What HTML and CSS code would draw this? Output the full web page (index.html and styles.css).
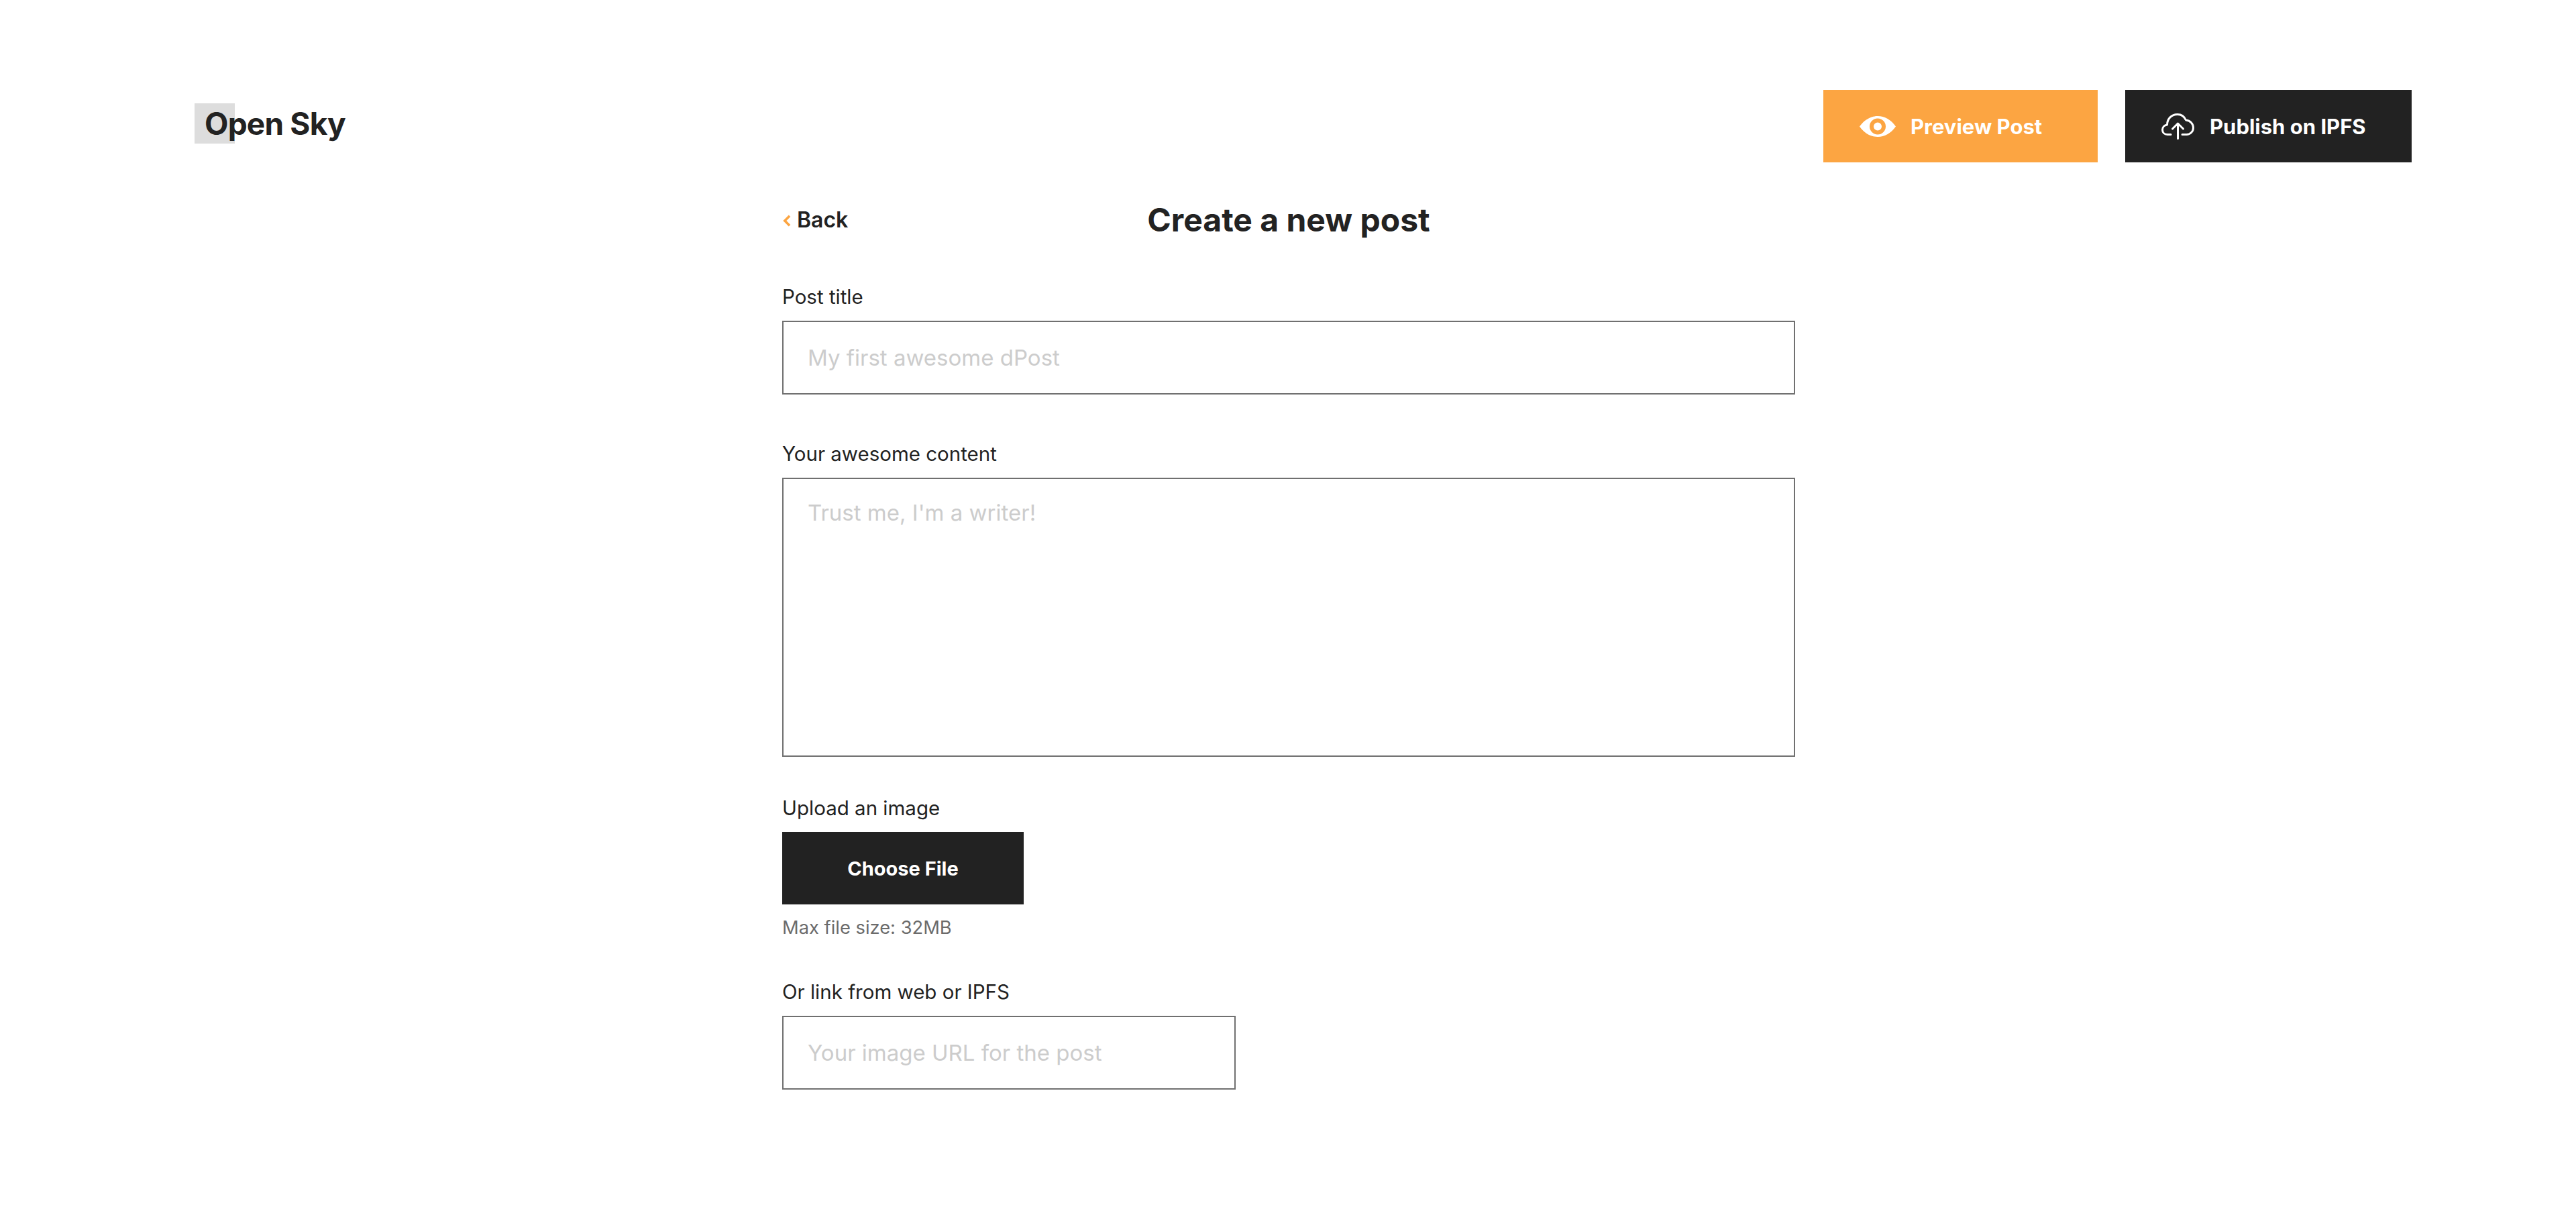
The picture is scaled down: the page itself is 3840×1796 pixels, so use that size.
FILE: index.html
```html
<!DOCTYPE html>
<html lang="en">
<head>
<meta charset="utf-8">
<title>Open Sky</title>
<link rel="stylesheet" href="styles.css">
</head>
<body>
<header class="topbar">
  <a class="logo" href="#"><span class="logo-mark"></span><span class="logo-text">Open Sky</span></a>
  <div class="actions">
    <button class="btn btn-orange" type="button">
      <svg class="icon-eye" viewBox="0 0 54 31" aria-hidden="true"><path fill-rule="evenodd" fill="#fff" d="M0 15.500C7 5.500 16.500 0 27 0s20 5.500 27 15.500C47 25.500 37.500 31 27 31S7 25.500 0 15.500Zm27 12a12 12 0 1 0 0-24 12 12 0 0 0 0 24Zm0-6a6 6 0 1 1 0-12 6 6 0 0 1 0 12Z"/></svg>
      <span>Preview Post</span>
    </button>
    <button class="btn btn-dark" type="button">
      <svg class="icon-cloud" viewBox="0 0 49 39" aria-hidden="true"><path fill="none" stroke="#fff" stroke-width="3" stroke-linecap="round" stroke-linejoin="round" d="M14 31.500H9C4.500 31.500 1.500 28.500 1.500 24.500c0-4 2.800-7 7-7.500C8.500 8 15 1.500 24 1.500c5.500 0 10 3 12.500 8.500 6.500.5 11 5.500 11 11.500 0 5.500-4.500 10-10 10H31M24.500 37.500V15M16.500 23l8-8 8 8"/></svg>
      <span>Publish on IPFS</span>
    </button>
  </div>
</header>
<main class="form-wrap">
  <div class="title-row">
    <a class="back" href="#"><svg class="back-chevron" viewBox="0 0 15 20" aria-hidden="true"><path fill="none" stroke="#fca542" stroke-width="4" d="M12 2 4 10l8 8"/></svg><span>Back</span></a>
    <h1>Create a new post</h1>
  </div>
  <form>
    <label class="label" for="title">Post title</label>
    <input class="field field-gap" id="title" type="text" placeholder="My first awesome dPost">
    <label class="label" for="content">Your awesome content</label>
    <textarea class="field area" id="content" placeholder="Trust me, I'm a writer!"></textarea>
    <label class="label" for="file">Upload an image</label>
    <button class="file-btn" id="file" type="button">Choose File</button>
    <p class="hint">Max file size: 32MB</p>
    <label class="label" for="url">Or link from web or IPFS</label>
    <input class="field short" id="url" type="text" placeholder="Your image URL for the post">
  </form>
</main>
</body>
</html>
```
FILE: styles.css
```css
* { box-sizing: border-box; }
html, body { margin: 0; padding: 0; background: #fff; }
body { font-family: "Inter", "Lato", sans-serif; color: #222; min-height: 1796px; }
.topbar { display: flex; justify-content: space-between; align-items: flex-start; padding: 134px 245px 0 290px; height: 242px; }
.logo { display: flex; align-items: center; margin-top: 20px; height: 60px; color: #222; text-decoration: none; position: relative; }
.logo-mark { position: absolute; left: 0; top: 0; width: 60px; height: 60px; background: #ddd; }
.logo-text { position: relative; margin-left: 15px; font-size: 46px; font-weight: 700; letter-spacing: -0.8px; }
.actions { display: flex; gap: 41px; }
.btn { display: flex; align-items: center; height: 108px; border: 0; padding: 0 0 0 54px; color: #fff; font: 700 31px "Inter", sans-serif; }
.btn-orange { width: 409px; background: #fca542; gap: 22px; }
.btn-dark { width: 427px; background: #222; gap: 23px; }
.icon-eye { width: 54px; height: 31px; flex: none; }
.icon-cloud { width: 49px; height: 39px; flex: none; }
.form-wrap { width: 1510px; margin-left: 1166px; }
.title-row { position: relative; height: 182px; display: flex; justify-content: center; }
.title-row h1 { margin: 57px 0 0; font-size: 48px; font-weight: 700; line-height: 58px; color: #222; }
.back { position: absolute; left: 0; top: 67px; display: flex; align-items: center; gap: 8px; font-size: 32px; font-weight: 600; line-height: 38px; color: #222; text-decoration: none; }
.back-chevron { width: 14px; height: 18px; margin-top: 2px; }
.label { display: block; font-size: 29.500px; line-height: 36px; color: #222; height: 36px; margin-bottom: 18px; }
.field { display: block; width: 1510px; height: 110px; border: 2px solid #707070; background: #fff; padding: 0 36px; font: 400 33px "Inter", sans-serif; color: #222; outline: 0; border-radius: 0; }
.field::placeholder { color: #ccc; opacity: 1; }
.field-gap { margin-bottom: 70px; }
.area { height: 416px; padding: 30px 36px; resize: none; margin-bottom: 58px; }
.file-btn { display: block; width: 360px; height: 108px; background: #222; color: #fff; border: 0; font: 700 29px "Inter", sans-serif; }
.hint { margin: 17px 0 59px; font-size: 27.300px; line-height: 36px; color: #6b6b6b; }
.short { width: 676px; }
```
